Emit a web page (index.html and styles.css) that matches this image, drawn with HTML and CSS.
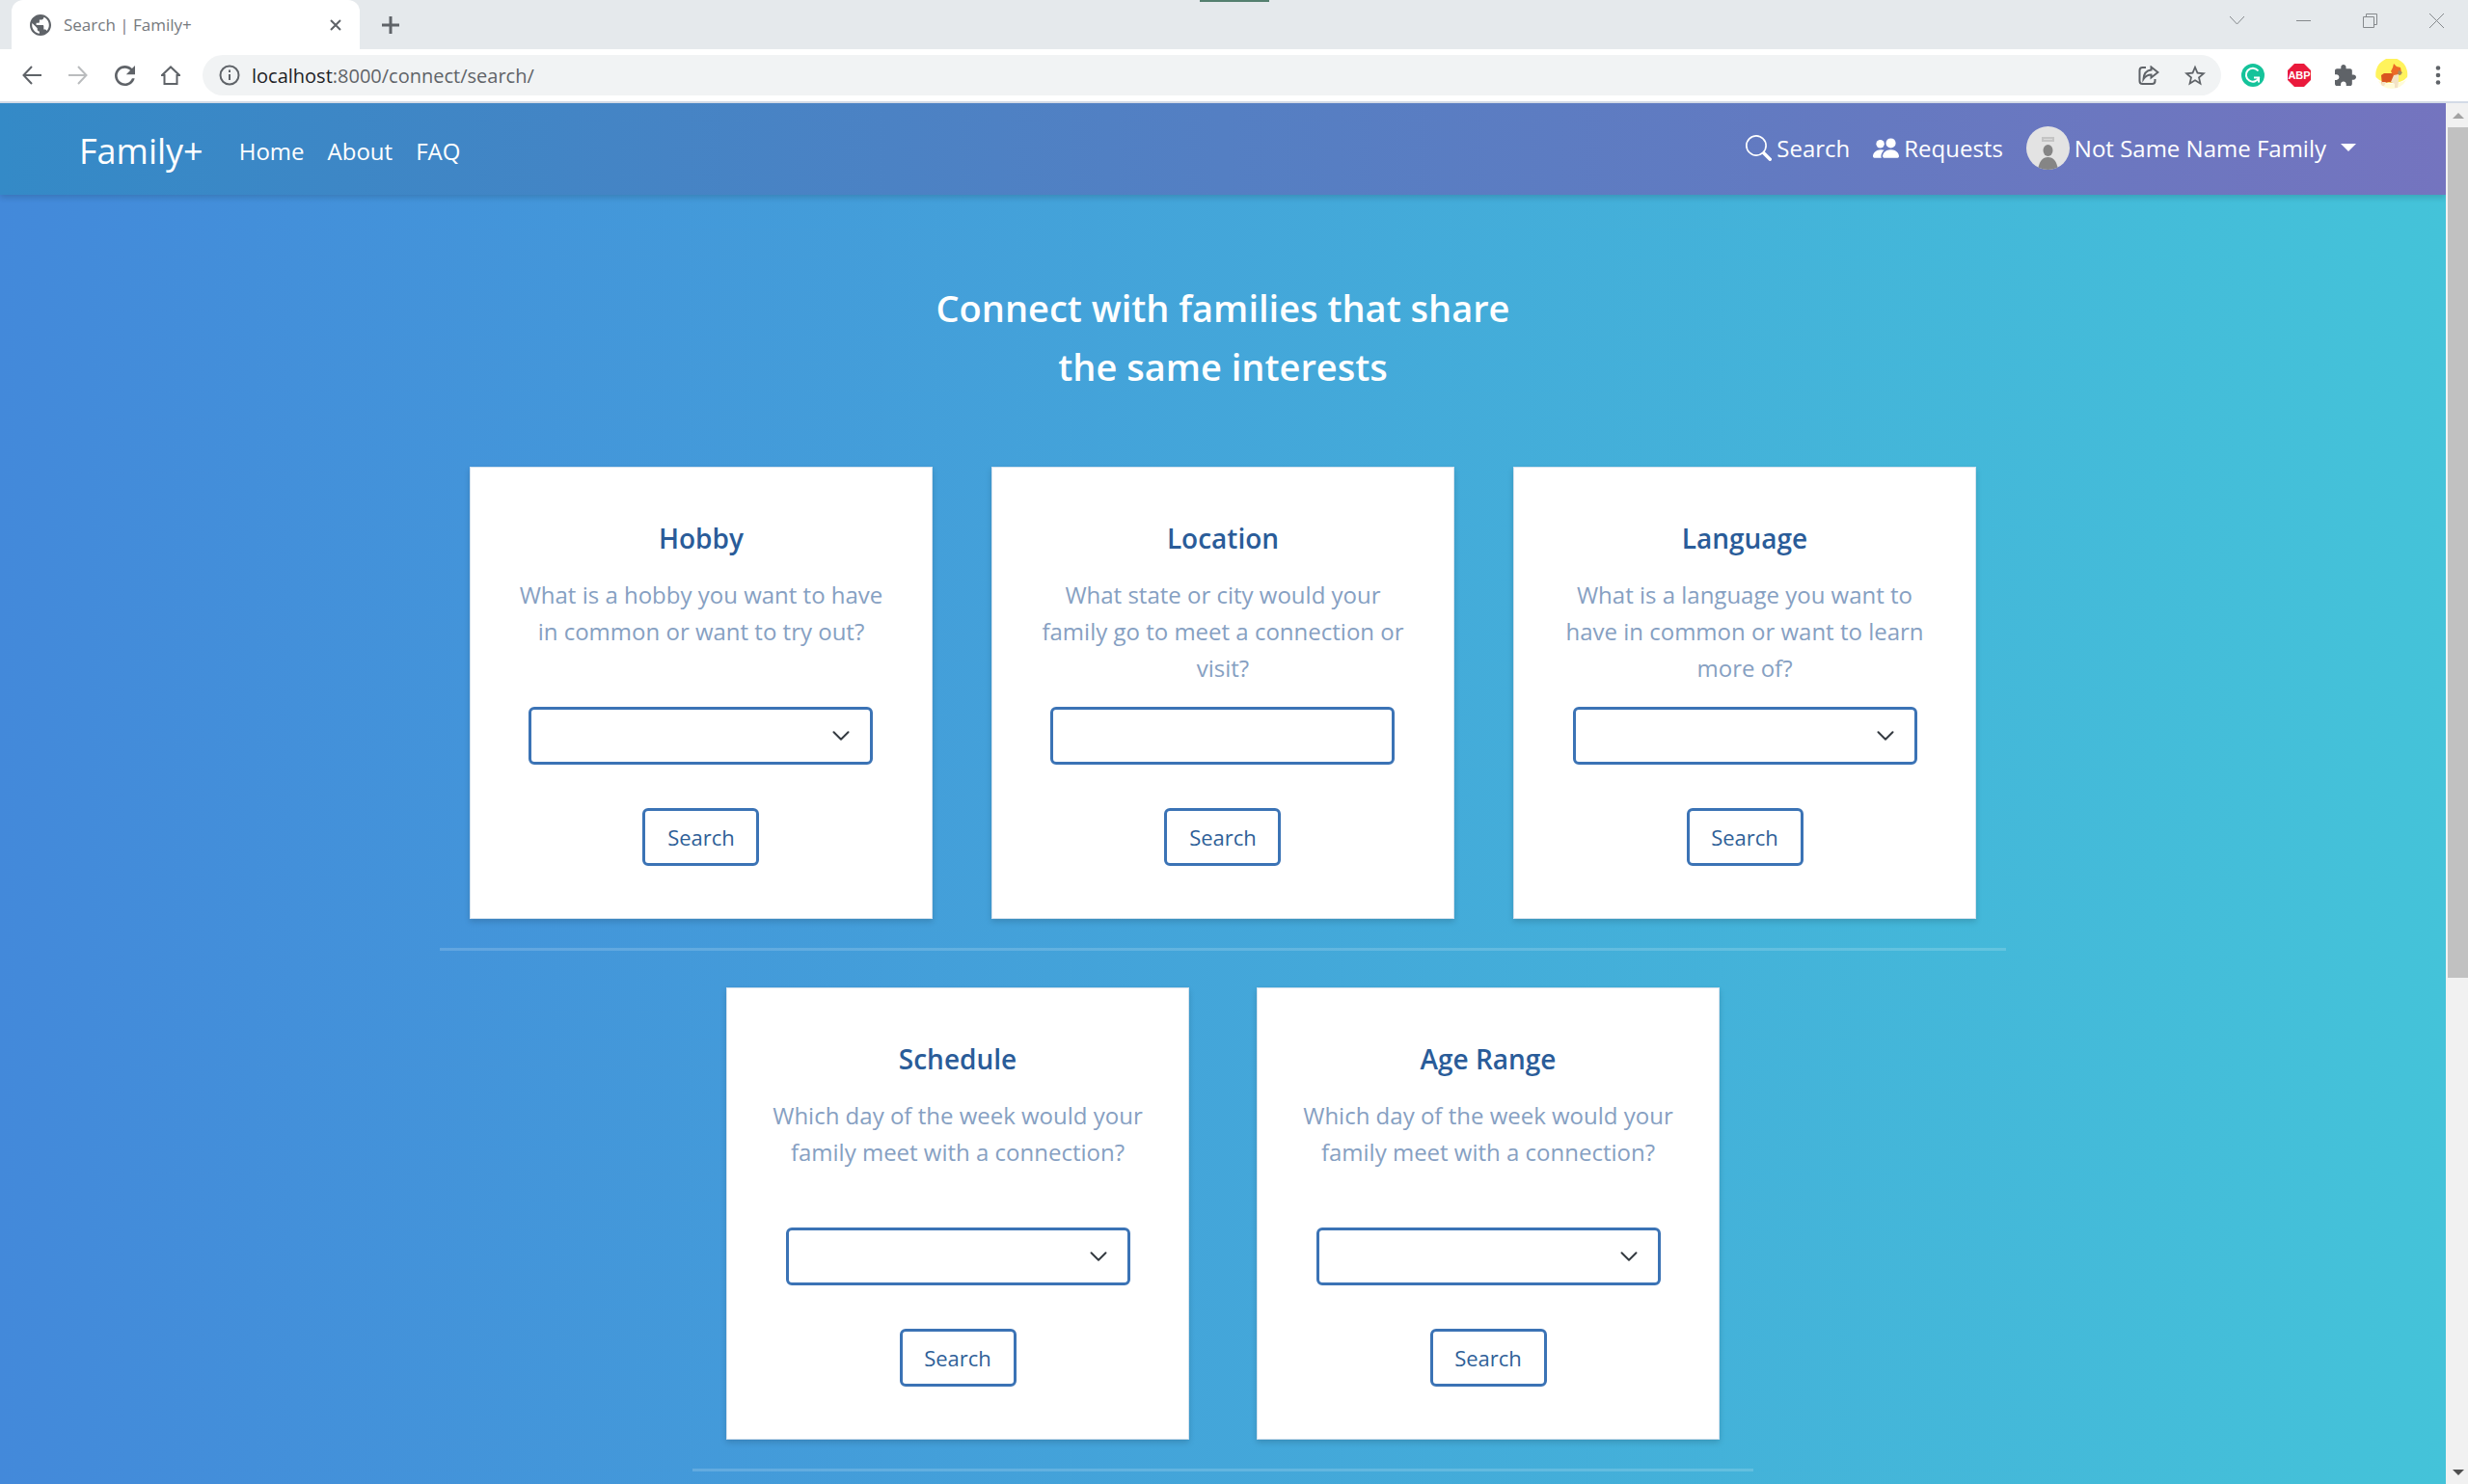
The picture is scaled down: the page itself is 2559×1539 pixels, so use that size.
FILE: index.html
```html
<!DOCTYPE html>
<html lang="en">
<head>
<meta charset="utf-8">
<title>Search | Family+</title>
<link rel="stylesheet" href="styles.css">
</head>
<body>
<div class="browser">
  <div class="tab-strip">
    <div class="tab">
      <svg class="icon tab-icon" viewBox="2 2 20 20"><path d="M12 2C6.480 2 2 6.480 2 12s4.480 10 10 10 10-4.480 10-10S17.520 2 12 2zm-1 17.930c-3.950-.490-7-3.850-7-7.930 0-.620.080-1.210.210-1.790L9 15v1c0 1.100.900 2 2 2v1.930zm6.900-2.540c-.260-.810-1-1.390-1.900-1.390h-1v-3c0-.550-.450-1-1-1H8v-2h2c.550 0 1-.450 1-1V7h2c1.100 0 2-.900 2-2v-.410c2.930 1.190 5 4.060 5 7.410 0 2.080-.800 3.970-2.100 5.390z"/></svg>
      <span class="tab-title">Search | Family+</span>
      <button class="plain" aria-label="Close tab"><svg width="12" height="12" viewBox="0 0 12 12"><path d="M1 1l10 10M11 1L1 11" class="line"/></svg></button>
    </div>
    <button class="plain new-tab" aria-label="New tab"><svg width="18" height="18" viewBox="0 0 18 18"><path d="M9 0v18M0 9h18" class="line bold"/></svg></button>
    <span class="drag-mark"></span>
    <div class="window-controls">
      <button class="plain" aria-label="Tab search"><svg width="15" height="15" viewBox="0 0 15 15"><path d="M0 3l7.500 8L15 3" class="line thin"/></svg></button>
      <button class="plain" aria-label="Minimize"><svg width="15" height="15" viewBox="0 0 15 15"><path d="M0 7.500h15" class="line thin"/></svg></button>
      <button class="plain" aria-label="Restore"><svg width="15" height="15" viewBox="0 0 15 15"><path d="M.5 3.500h11v11H.5zM3.500 3.500v-3h11v11h-3" class="line thin"/></svg></button>
      <button class="plain" aria-label="Close"><svg width="15" height="15" viewBox="0 0 15 15"><path d="M0 0l15 15M15 0L0 15" class="line thin"/></svg></button>
    </div>
  </div>
  <div class="toolbar">
    <button class="tool" aria-label="Back"><svg width="20" height="20" viewBox="0 0 20 20"><path d="M20 10H2M10 1L1.500 10 10 19" class="line"/></svg></button>
    <button class="tool faded" aria-label="Forward"><svg width="20" height="20" viewBox="0 0 20 20"><path d="M0 10h18M10 1l8.500 9L10 19" class="line"/></svg></button>
    <button class="tool" aria-label="Reload"><svg class="icon" width="21" height="21" viewBox="4 4 16 16"><path d="M17.650 6.350C16.200 4.900 14.210 4 12 4c-4.420 0-7.990 3.580-7.990 8s3.570 8 7.990 8c3.730 0 6.840-2.550 7.730-6h-2.080c-.820 2.330-3.040 4-5.650 4-3.310 0-6-2.690-6-6s2.690-6 6-6c1.660 0 3.140.690 4.220 1.780L13 11h7V4l-2.350 2.350z"/></svg></button>
    <button class="tool" aria-label="Home"><svg width="20" height="20" viewBox="0 0 20 20"><path d="M3.500 10v9h13v-9h2.500L10 1.500 1 10z" class="line"/></svg></button>
    <div class="omnibox">
      <svg width="22" height="22" viewBox="0 0 22 22"><circle cx="11" cy="11" r="9.500" class="line"/><path d="M11 10v6M11 5.500v2.500" class="line"/></svg>
      <span class="url"><b>localhost</b>:8000/connect/search/</span>
      <button class="tool" aria-label="Share"><svg width="22" height="20" viewBox="0 0 22 20"><path d="M8 2H4.500Q1.500 2 1.500 5v11q0 3 3 3h10q3 0 3-3v-2" class="line"/><path d="M13.500 1.500l7 5.500-7 5.500V9.500q-5 0-8 4.500.5-8.500 8-9.500z" class="line"/></svg></button>
      <button class="tool" aria-label="Bookmark"><svg class="icon" width="22" height="22" viewBox="2 1.500 20 20"><path d="M22 9.240l-7.190-.620L12 2 9.190 8.630 2 9.240l5.460 4.730L5.820 21 12 17.270 18.180 21l-1.630-7.030L22 9.240zM12 15.400l-3.760 2.270 1-4.280-3.320-2.880 4.380-.380L12 6.100l1.710 4.040 4.380.380-3.320 2.880 1 4.280L12 15.400z"/></svg></button>
    </div>
    <button class="tool" aria-label="Grammarly"><svg width="24" height="24" viewBox="0 0 24 24"><circle cx="12" cy="12" r="12" fill="#15c39a"/><path d="M17.500 7.500A7 7 0 1 0 18.500 14M13 14.500h5v5" fill="none" stroke="#fff" stroke-width="2"/></svg></button>
    <button class="tool" aria-label="AdBlock Plus"><svg width="24" height="24" viewBox="0 0 24 24"><path d="M7 0h10l7 7v10l-7 7H7l-7-7V7z" fill="#ea1a3c"/><text x="12" y="16" class="abp">ABP</text></svg></button>
    <button class="tool" aria-label="Extensions"><svg class="icon" width="22" height="22" viewBox="2 1 21 21"><path d="M20.500 11H19V7c0-1.100-.900-2-2-2h-4V3.500C13 2.120 11.880 1 10.500 1S8 2.120 8 3.500V5H4c-1.100 0-1.990.900-1.990 2v3.800H3.500c1.490 0 2.700 1.210 2.700 2.700s-1.210 2.700-2.700 2.700H2V20c0 1.100.900 2 2 2h3.800v-1.500c0-1.490 1.210-2.700 2.700-2.700 1.490 0 2.700 1.210 2.700 2.700V22H17c1.100 0 2-.900 2-2v-4h1.500c1.380 0 2.500-1.120 2.500-2.500S21.880 11 20.500 11z"/></svg></button>
    <button class="tool" aria-label="Profile"><svg width="34" height="34" viewBox="0 0 34 34"><path d="M.5 19a16.500 17 0 1 1 32.500 0q-5 6-16 6T.5 19z" fill="#fff35c"/><path d="M3 23q14 6 29-1-5 9-15 9T3 23z" fill="#fffbd8"/><path d="M6 17l3-2h9l3 2 3 2-2 6-8-1-4 1-2 3H7z" fill="#d9561f"/><path d="M16 13l2-4 1-4 3 3 4 1 1 5-3 3-5 1z" fill="#ec6a26"/><path d="M24 12l4 2-2 3-3-1z" fill="#a58a5e"/><path d="M19 17l5-1v7l-1 7h-3v-4l-4-2zM7 24h4l-2 4H7z" fill="#f3e2c4"/></svg></button>
    <button class="tool" aria-label="Menu"><svg class="icon" width="6" height="20" viewBox="0 0 6 20"><circle cx="3" cy="2.500" r="2.300"/><circle cx="3" cy="10" r="2.300"/><circle cx="3" cy="17.500" r="2.300"/></svg></button>
  </div>

  <div class="viewport">
    <div class="page">
      <nav class="navbar">
        <a class="brand" href="#">Family+</a>
        <a href="#">Home</a>
        <a href="#">About</a>
        <a href="#">FAQ</a>
        <div class="nav-right">
          <a href="#"><svg class="icon" width="27" height="27" viewBox="0 0 16 16"><path d="M11.742 10.344a6.500 6.500 0 1 0-1.397 1.398h-.001c.030.040.062.078.098.115l3.850 3.850a1 1 0 0 0 1.415-1.414l-3.850-3.850a1.007 1.007 0 0 0-.115-.100zM12 6.500a5.500 5.500 0 1 1-11 0 5.500 5.500 0 0 1 11 0z"/></svg>Search</a>
          <a href="#"><svg class="icon" width="27" height="27" viewBox="0 0 16 16"><path d="M7 14s-1 0-1-1 1-4 5-4 5 3 5 4-1 1-1 1H7zm4-6a3 3 0 1 0 0-6 3 3 0 0 0 0 6z"/><path d="M5.216 14A2.238 2.238 0 0 1 5 13c0-1.355.680-2.750 1.936-3.720A6.325 6.325 0 0 0 5 9c-4 0-5 3-5 4s1 1 1 1h4.216z"/><path d="M4.500 8a2.500 2.500 0 1 0 0-5 2.500 2.500 0 0 0 0 5z"/></svg>Requests</a>
          <a href="#"><svg width="45" height="45" viewBox="0 0 45 45"><clipPath id="round"><circle cx="22.500" cy="22.500" r="22.500"/></clipPath><g clip-path="url(#round)"><path d="M0 0h45v45H0z" fill="#e3e3e3"/><path d="M16 11h13v5H16z" fill="#c4c4c4"/><path d="M18 13h9v1h-9z" fill="#dadada"/><ellipse cx="22.500" cy="25" rx="5" ry="6" fill="#858585"/><path d="M12 45q2-13 10.500-13T33 45z" fill="#858585"/></g></svg>Not Same Name Family<span class="caret"></span></a>
        </div>
      </nav>

      <main>
        <h1>Connect with families that share the same interests</h1>
        <div class="row three">
          <form class="card">
            <h2>Hobby</h2>
            <label for="hobby">What is a hobby you want to have in common or want to try out?</label>
            <select id="hobby"><option></option></select>
            <button type="button">Search</button>
          </form>
          <form class="card">
            <h2>Location</h2>
            <label for="location">What state or city would your family go to meet a connection or visit?</label>
            <input id="location" type="text">
            <button type="button">Search</button>
          </form>
          <form class="card">
            <h2>Language</h2>
            <label for="language">What is a language you want to have in common or want to learn more of?</label>
            <select id="language"><option></option></select>
            <button type="button">Search</button>
          </form>
        </div>
        <div class="row two">
          <form class="card">
            <h2>Schedule</h2>
            <label for="schedule">Which day of the week would your family meet with a connection?</label>
            <select id="schedule"><option></option></select>
            <button type="button">Search</button>
          </form>
          <form class="card">
            <h2>Age Range</h2>
            <label for="age">Which day of the week would your family meet with a connection?</label>
            <select id="age"><option></option></select>
            <button type="button">Search</button>
          </form>
        </div>
      </main>
    </div>
    <div class="scrollbar">
      <span class="arrow up"></span>
      <div class="track"><div class="thumb"></div></div>
      <span class="arrow down"></span>
    </div>
  </div>
</div>
</body>
</html>
```

FILE: styles.css
```css
* {
  box-sizing: border-box;
}

body {
  margin: 0;
  font-family: "Open Sans", "Noto Sans", sans-serif;
  font-size: 24px;
}

svg {
  display: block;
  flex: none;
}

.icon {
  fill: currentColor;
}

.line {
  fill: none;
  stroke: currentColor;
  stroke-width: 2;
}

.line.bold {
  stroke-width: 3;
}

.line.thin {
  stroke-width: 1;
}

.browser {
  display: flex;
  flex-direction: column;
  height: 100vh;
  overflow: hidden;
  color: #5f6368;
}

/* Tab strip */
.tab-strip {
  position: relative;
  display: flex;
  align-items: center;
  height: 51px;
  flex: none;
  padding: 0 25px 0 12px;
  background: #e5e9ec;
}

.plain,
.tool {
  display: flex;
  align-items: center;
  justify-content: center;
  padding: 0;
  border: 0;
  background: none;
  color: inherit;
}

.tab {
  display: flex;
  align-items: center;
  gap: 13px;
  align-self: stretch;
  width: 361px;
  padding: 0 19px;
  border-radius: 12px 12px 0 0;
  background: #fff;
}

.tab-icon {
  width: 22px;
  height: 22px;
}

.tab-title {
  flex: 1;
  color: #75797d;
  font-size: 17px;
}

.new-tab {
  margin-left: 23px;
}

.drag-mark {
  position: absolute;
  top: 0;
  left: 50%;
  width: 72px;
  height: 2px;
  margin-left: -36px;
  background: #55806f;
}

.window-controls {
  display: flex;
  gap: 54px;
  margin-left: auto;
  padding-bottom: 8px;
  color: #85898c;
}

/* Toolbar */
.toolbar {
  display: flex;
  align-items: center;
  flex: none;
  height: 56px;
  padding: 0 7px 0 9px;
  border-bottom: 2px solid #d3dae6;
  background: #fff;
}

.tool {
  flex: none;
  width: 48px;
  height: 42px;
}

.tool.faded {
  color: #babcbe;
}

.omnibox {
  display: flex;
  align-items: center;
  flex: 1;
  height: 42px;
  margin: 0 9px;
  padding: 0 3px 0 17px;
  border-radius: 21px;
  background: #f1f3f4;
}

.url {
  flex: 1;
  padding-left: 12px;
  font-size: 20px;
}

.url b {
  font-weight: 400;
  color: #202124;
}

.abp {
  fill: #fff;
  font-size: 11px;
  font-weight: 700;
  text-anchor: middle;
}

/* Page */
.viewport {
  display: flex;
  flex: 1;
  min-height: 0;
}

.page {
  flex: 1;
  overflow: hidden;
  background: linear-gradient(90deg, #4389da, #44c3d9);
}

.navbar {
  display: flex;
  align-items: center;
  gap: 24px;
  height: 95px;
  padding: 3px 93px 0 82px;
  background: linear-gradient(90deg, #348ac7, #7474bf);
  box-shadow: 0 3px 6px rgba(0, 0, 0, 0.15);
}

.navbar a {
  display: flex;
  align-items: center;
  gap: 5px;
  color: #fff;
  text-decoration: none;
}

.navbar .brand {
  margin-right: 13px;
  font-size: 36px;
}

.nav-right {
  display: flex;
  gap: 24px;
  margin-left: auto;
  padding-bottom: 6px;
}

.caret {
  margin-left: 10px;
  border: 8px solid transparent;
  border-top-color: #fff;
  border-bottom: 0;
}

main {
  display: flex;
  flex-direction: column;
  align-items: center;
}

h1 {
  max-width: 640px;
  margin: 87px 0 73px;
  color: #fff;
  font-size: 38px;
  font-weight: 600;
  line-height: 61px;
  text-align: center;
}

.row {
  display: grid;
  justify-items: center;
  padding-bottom: 30px;
  margin-bottom: 38px;
  border-bottom: 3px solid rgba(255, 255, 255, 0.17);
}

.three {
  width: 64%;
  grid-template-columns: repeat(3, 1fr);
}

.two {
  width: 1100px;
  grid-template-columns: repeat(2, 1fr);
}

.card {
  display: flex;
  flex-direction: column;
  align-items: center;
  width: 480px;
  padding: 55px 42px 54px;
  border: 1px solid #d5e2ee;
  background: #fff;
  box-shadow: 0 3px 6px rgba(0, 0, 0, 0.15);
}

.card h2 {
  margin: 0 0 22px;
  color: #2a5c99;
  font-size: 28px;
  font-weight: 600;
  line-height: 36px;
}

.card label {
  min-height: 114px;
  margin-bottom: 21px;
  color: #86a0c2;
  line-height: 38px;
  text-align: center;
}

.card select,
.card input,
.card button {
  height: 60px;
  border: 3px solid #3b73b5;
  border-radius: 6px;
  background: #fff;
  color: #2f5f98;
  font: inherit;
  font-size: 22px;
}

.card select,
.card input {
  width: 357px;
  margin-bottom: 45px;
  padding: 0 18px;
}

.card select {
  appearance: none;
  background: #fff url("data:image/svg+xml,%3Csvg xmlns='http://www.w3.org/2000/svg' viewBox='0 0 16 16'%3E%3Cpath fill='none' stroke='%23343a40' stroke-linecap='round' stroke-linejoin='round' stroke-width='1.6' d='M2 5l6 6 6-6'/%3E%3C/svg%3E") no-repeat right 20px center / 20px 20px;
}

.card button {
  width: 121px;
  padding: 0;
}

/* Scrollbar */
.scrollbar {
  display: flex;
  flex-direction: column;
  flex: none;
  width: 23px;
  padding-left: 2px;
  background: #f1f1f1;
}

.track {
  flex: 1;
}

.thumb {
  height: calc(64% - 2px);
  background: #c1c1c1;
}

.arrow {
  display: flex;
  align-items: center;
  justify-content: center;
  height: 25px;
}

.arrow::before {
  content: "";
  border: 6px solid transparent;
}

.up::before {
  border-top: 0;
  border-bottom-color: #a3a3a3;
}

.down::before {
  border-bottom: 0;
  border-top-color: #505050;
}
```
